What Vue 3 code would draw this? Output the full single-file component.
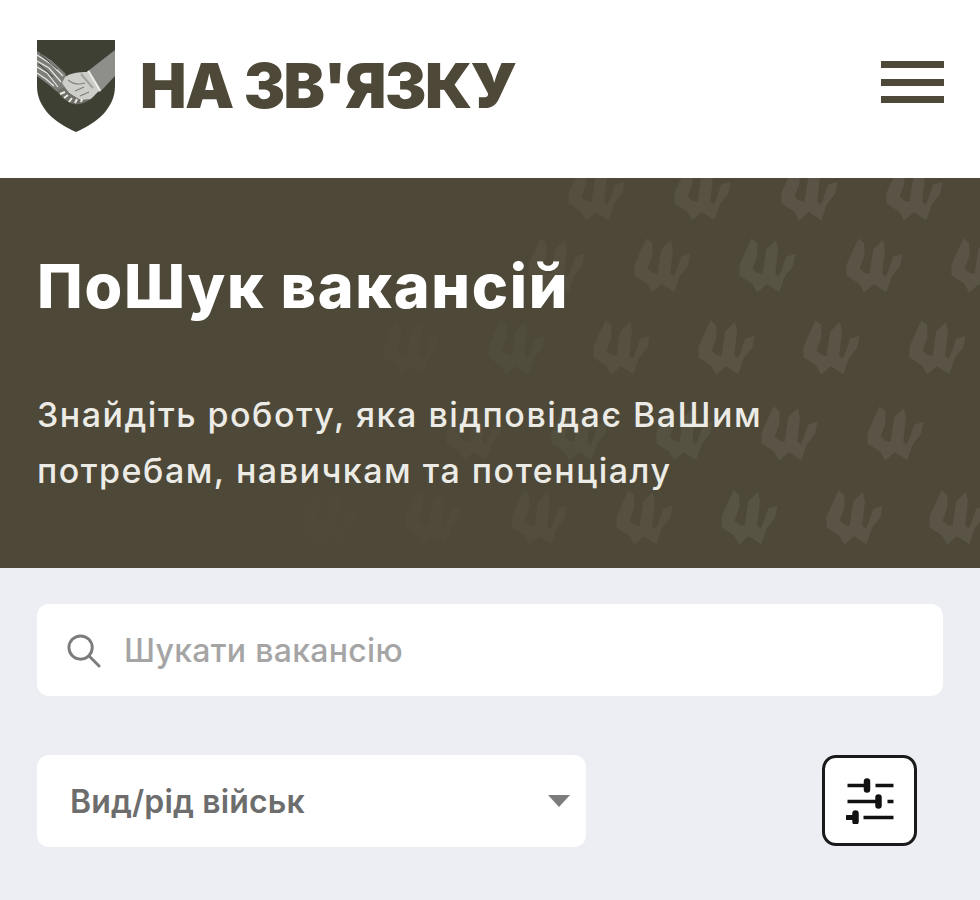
<template>
  <div class="page">
    <header class="top-bar">
      <div class="brand">
        <svg class="shield" viewBox="0 0 78 92" aria-hidden="true">
          <defs>
            <clipPath id="shield-clip">
              <path d="M0 0H78V46C78 68 60 83 39 92C18 83 0 68 0 46Z" />
            </clipPath>
          </defs>
          <g clip-path="url(#shield-clip)">
            <rect width="78" height="92" fill="#3d4033" />
            <!-- sleeve -->
            <path d="M51 31L78 10V36L63 52Z" fill="#8e8e8b" />
            <path d="M51 31L63 51" stroke="#ecece8" stroke-width="2.6" fill="none" />
            <!-- left arm -->
            <path d="M0 11L14 20L28 33L34 52L24 55L12 45L0 36Z" fill="#7d7d79" />
            <path d="M0 15L14 24L26 36M0 21L12 28L24 42M0 27L10 33L21 47M0 33L9 39L17 46" stroke="#e8e8e4" stroke-width="1.2" fill="none" />
            <path d="M3 14L20 29M2 24L16 37" stroke="#3f3f3b" stroke-width="1" fill="none" />
            <!-- hand -->
            <path d="M28 37C33 33 42 32 51 32L62 51C58 54 56 58 52 60L44 61L32 53L25 43Z" fill="#cdcdc9" />
            <path d="M31 40C36 44 42 45 48 43M38 51L47 47M43 56L52 52" stroke="#7f7f79" stroke-width="1.1" fill="none" />
            <path d="M44 34L56 48" stroke="#a2a29d" stroke-width="2" fill="none" />
            <!-- lower fingers -->
            <path d="M20 51C24 57 31 63 37 64C43 65 49 63 53 59L44 60L33 54L27 47Z" fill="#6f6f67" />
            <path d="M23 54L28 52M27 58L31 55M32 62L35 58M38 63L40 59M44 62L45 59" stroke="#ecece6" stroke-width="2" fill="none" />
          </g>
        </svg>
        <span class="brand-name">НА ЗВ'ЯЗКУ</span>
      </div>
      <button class="burger" type="button" aria-label="Меню">
        <span></span>
        <span></span>
        <span></span>
      </button>
    </header>

    <section class="hero">
      <svg class="hero-pattern" viewBox="0 0 980 390" aria-hidden="true">
        <defs>
          <path
            id="trident"
            d="M-13 -27L-8 -22L-9 -10L-15 2L-11 6L-6 8L-2 -8L0 -15L10 -23L11 -14L6 9L9 12L13 5L18 -6L27 -8L24 3L15 12L8 27L2 22L-3 18L-13 25L-17 16L-28 7L-27 -3Z"
          />
        </defs>
        <use
          v-for="t in tridents"
          :key="t.id"
          href="#trident"
          fill="#fff"
          :opacity="t.opacity"
          :transform="`translate(${t.x} ${t.y}) rotate(-6) scale(1.05)`"
        />
      </svg>
      <h1 class="hero-title">ПоШук вакансій</h1>
      <p class="hero-text">Знайдіть роботу, яка відповідає ВаШим<br />потребам, навичкам та потенціалу</p>
    </section>

    <main class="filters">
      <label class="search">
        <svg class="search-icon" viewBox="0 0 36 36" aria-hidden="true">
          <circle cx="15" cy="15" r="12" fill="none" stroke="#7c7c7c" stroke-width="3" />
          <path d="M24 24L34 34" stroke="#7c7c7c" stroke-width="3" stroke-linecap="round" />
        </svg>
        <span class="search-placeholder">Шукати вакансію</span>
      </label>
      <div class="filter-row">
        <div class="select">
          <span>Вид/рід військ</span>
          <i class="caret"></i>
        </div>
        <button class="filter-btn" type="button" aria-label="Фільтри">
          <svg viewBox="0 0 48 46" width="48" height="46" aria-hidden="true">
            <g stroke="#111" stroke-width="3.4" fill="none">
              <path d="M1.5 7.5H18M29.5 7.5H47.5M1.5 23.5H30M41.5 23.5H47.5M17.5 39.5H47.5" />
            </g>
            <g stroke="#111" stroke-width="6.5" stroke-linecap="round">
              <path d="M21 3.5V11.5M32.5 19.5V27.5M9.5 35.5V43.5" />
            </g>
            <path d="M1.5 39.5H8" stroke="#111" stroke-width="5" stroke-linecap="round" />
          </svg>
        </button>
      </div>
    </main>
  </div>
</template>

<script setup>
// rows of the trident watermark, they fade out towards the left
const rows = [
  { y: 15, xs: [597, 703, 810, 915] },
  { y: 87, xs: [557, 663, 768, 875, 980] },
  { y: 169, xs: [412, 517, 622, 727, 832, 938] },
  { y: 255, xs: [475, 580, 685, 790, 896] },
  { y: 339, xs: [330, 434, 540, 645, 750, 855, 958] },
];

const tridents = rows.flatMap((row) =>
  row.xs.map((x) => ({
    id: `${row.y}-${x}`,
    x,
    y: row.y,
    opacity: Math.max(0.008, Math.min(0.07, ((x - 330) / 450) * 0.07)),
  }))
);
</script>

<style scoped>
.page {
  width: 980px;
  height: 900px;
  overflow: hidden;
  background: #eceef3;
  font-family: Inter, "Noto Sans", sans-serif;
}

.top-bar {
  height: 178px;
  box-sizing: border-box;
  background: #fff;
  padding: 0 36px 0 37px;
  display: flex;
  align-items: flex-start;
  justify-content: space-between;
}

.brand {
  margin-top: 41px;
  display: flex;
  align-items: center;
  gap: 25px;
}

.shield {
  width: 78px;
  height: 92px;
  display: block;
  margin-top: -1px;
}

.brand-name {
  font-size: 62px;
  line-height: 1;
  font-weight: 900;
  color: #4d4837;
  letter-spacing: -1.5px;
  margin-top: -2px;
}

.burger {
  margin-top: 61px;
  width: 63px;
  height: 42px;
  padding: 0;
  border: 0;
  background: none;
  display: flex;
  flex-direction: column;
  justify-content: space-between;
}

.burger span {
  display: block;
  height: 7px;
  background: #4d4837;
}

.hero {
  position: relative;
  height: 390px;
  box-sizing: border-box;
  background: #4d4837;
  padding: 70px 37px 0;
  overflow: hidden;
}

.hero-pattern {
  position: absolute;
  inset: 0;
  width: 980px;
  height: 390px;
  filter: blur(0.7px);
}

.hero-title {
  position: relative;
  margin: 0;
  font-size: 61px;
  line-height: 76px;
  font-weight: 800;
  color: #fff;
  letter-spacing: 1.75px;
}

.hero-text {
  position: relative;
  margin: 63px 0 0;
  font-size: 34px;
  line-height: 56px;
  font-weight: 500;
  color: #ecebe6;
  letter-spacing: 1.5px;
}

.filters {
  padding: 36px 37px 0;
}

.search {
  height: 92px;
  background: #fff;
  border-radius: 12px;
  display: flex;
  align-items: center;
  padding-left: 29px;
  gap: 23px;
}

.search-icon {
  width: 35px;
  height: 35px;
}

.search-placeholder {
  font-size: 32px;
  font-weight: 500;
  color: #a5a5a5;
  letter-spacing: 0.3px;
}

.filter-row {
  margin-top: 59px;
  display: flex;
  justify-content: space-between;
  align-items: flex-start;
  padding-right: 26px;
}

.select {
  width: 549px;
  height: 92px;
  box-sizing: border-box;
  background: #fff;
  border-radius: 12px;
  padding: 0 16px 0 33px;
  display: flex;
  align-items: center;
  justify-content: space-between;
  font-size: 32px;
  font-weight: 600;
  color: #6d6d6d;
  letter-spacing: 0.15px;
}

.caret {
  width: 0;
  height: 0;
  border-left: 11px solid transparent;
  border-right: 11px solid transparent;
  border-top: 12px solid #7c7c7c;
}

.filter-btn {
  width: 95px;
  height: 91px;
  box-sizing: border-box;
  padding: 0;
  background: #fff;
  border: 3px solid #1a1a1a;
  border-radius: 14px;
  display: flex;
  align-items: center;
  justify-content: center;
}
</style>
